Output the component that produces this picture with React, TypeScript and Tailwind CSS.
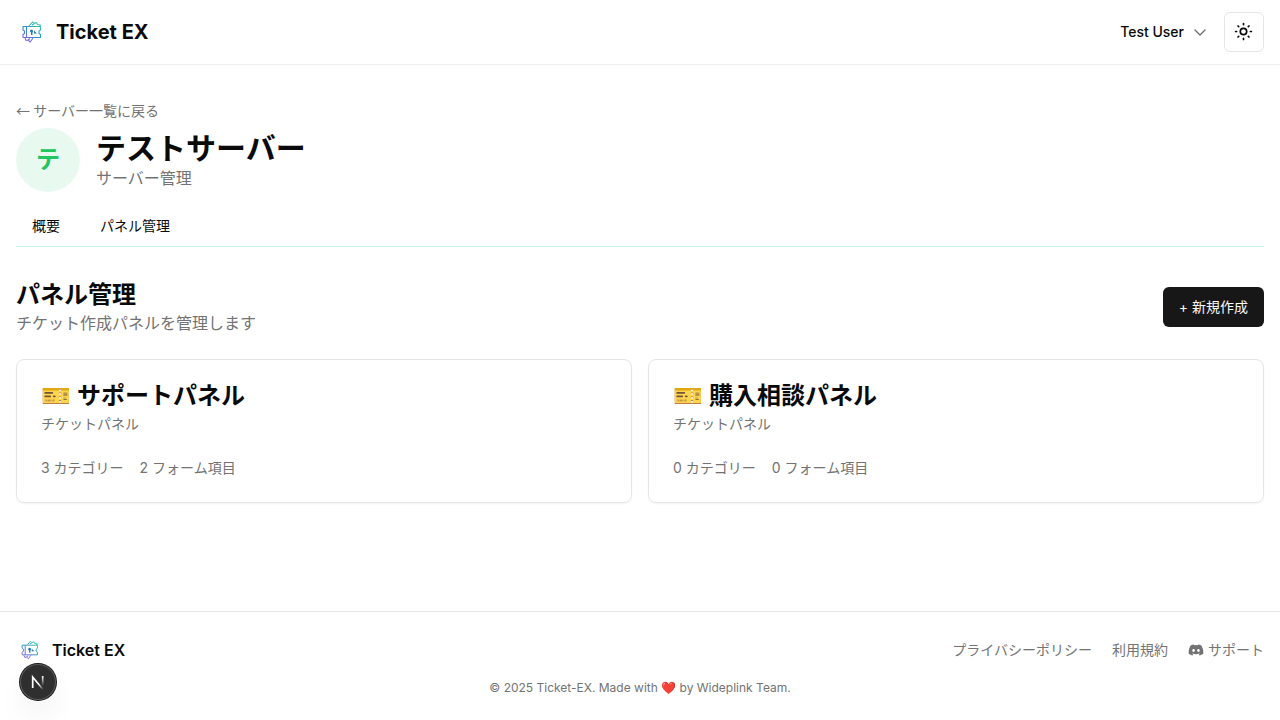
import { FaDiscord } from "react-icons/fa";

const panels = [
  { id: "support", name: "サポートパネル", categories: 3, fields: 2 },
  { id: "purchase", name: "購入相談パネル", categories: 0, fields: 0 },
];

function Logo({ id, className }: { id: string; className: string }) {
  return (
    <svg viewBox="0 0 32 32" fill="none" className={className} aria-hidden="true">
      <defs>
        <linearGradient id={id} x1="8" y1="26" x2="23" y2="6" gradientUnits="userSpaceOnUse">
          <stop offset="0" stopColor="#a05be0" />
          <stop offset="0.5" stopColor="#2f8fd0" />
          <stop offset="1" stopColor="#35d3a0" />
        </linearGradient>
      </defs>
      <g stroke={`url(#${id})`} strokeWidth="1.100" strokeLinejoin="round">
        <path d="M7 10.500h17.500v3.500l-1.500 1v2.500l1.500 1V21.500H7V18.500l1.500-1V15L7 14z" />
        <path d="M10.500 10.500v11" />
        <path d="M13 10l3.500-4 1.500 1.500 2.500-1 .8 2 3.200.5-1 1.500M16 9l2.500-1.500" />
        <path d="M9 22l1 2.500 2-.5 2.200 2 2.800-4M12 24l2-1.500" />
      </g>
      <circle cx="15.500" cy="15" r="1.500" fill="#2478b8" />
      <path d="M15 15h1.500v4H15zM18 14.500l3 3h-3z" fill="#2478b8" />
    </svg>
  );
}

function SunIcon() {
  return (
    <svg
      viewBox="0 0 20 20"
      fill="none"
      stroke="currentColor"
      strokeWidth="1.700"
      strokeLinecap="round"
      className="size-5"
      aria-hidden="true"
    >
      <circle cx="9.500" cy="9.500" r="3.200" />
      <path d="M9.500 1.600v1M9.500 16.400v1M1.600 9.500h1M16.400 9.500h1M4 4l.7.700M14.300 14.300l.7.700M4 15l.7-.7M14.300 4.700l.7-.7" />
    </svg>
  );
}

function ChevronIcon() {
  return (
    <svg
      viewBox="0 0 16 16"
      fill="none"
      stroke="currentColor"
      strokeWidth="1.300"
      strokeLinecap="round"
      strokeLinejoin="round"
      className="size-4 opacity-60"
      aria-hidden="true"
    >
      <path d="M3 6l5 5 5-5" />
    </svg>
  );
}

function Header() {
  return (
    <header className="border-b border-[#f0f0f0]">
      <div className="flex h-16 items-center justify-between px-4">
        <a href="#" className="flex items-center gap-2">
          <Logo id="logo-header" className="size-8" />
          <span className="text-xl font-bold">Ticket EX</span>
        </a>
        <div className="flex items-center gap-4">
          <button type="button" className="flex items-center gap-2 text-sm font-medium">
            Test User
            <ChevronIcon />
          </button>
          <button
            type="button"
            aria-label="テーマ切り替え"
            className="flex size-10 items-center justify-center rounded-md border border-[#e5e5e5]"
          >
            <SunIcon />
          </button>
        </div>
      </div>
    </header>
  );
}

function PanelCard({ panel }: { panel: (typeof panels)[number] }) {
  return (
    <div className="rounded-lg border border-[#e5e5e5] p-6 shadow-xs">
      <h3 className="text-2xl leading-none font-semibold">🎫 {panel.name}</h3>
      <p className="mt-1.5 text-sm text-[#737373]">チケットパネル</p>
      <div className="mt-6 flex gap-4 text-sm text-[#737373]">
        <span>{panel.categories} カテゴリー</span>
        <span>{panel.fields} フォーム項目</span>
      </div>
    </div>
  );
}

function Footer() {
  return (
    <footer className="border-t border-[#e5e5e5] px-4 py-6">
      <div className="flex h-7 items-center justify-between">
        <a href="#" className="flex items-center gap-2">
          <Logo id="logo-footer" className="size-7" />
          <span className="font-semibold">Ticket EX</span>
        </a>
        <nav className="flex items-center gap-5 text-sm text-[#737373]">
          <a href="#">プライバシーポリシー</a>
          <a href="#">利用規約</a>
          <a href="#" className="flex items-center gap-1">
            <FaDiscord className="size-4" />
            サポート
          </a>
        </nav>
      </div>
      <p className="mt-4 text-center text-xs text-[#737373]">
        © 2025 Ticket-EX. Made with ❤️ by Wideplink Team.
      </p>
    </footer>
  );
}

function DevBadge() {
  return (
    <button
      type="button"
      aria-label="Open dev tools"
      className="fixed bottom-5 left-5 size-9 rounded-full bg-[#2f2f2f] shadow-[0_0_0_1px_#171717,inset_0_0_0_1px_#5a5a5a,0_16px_32px_-8px_rgba(0,0,0,0.16)]"
    >
      <svg viewBox="0 0 36 36" fill="none" className="size-9" aria-hidden="true">
        <defs>
          <linearGradient id="n-diagonal" x1="20" y1="19" x2="24" y2="25" gradientUnits="userSpaceOnUse">
            <stop stopColor="#fff" />
            <stop offset="1" stopColor="#fff" stopOpacity="0" />
          </linearGradient>
          <linearGradient id="n-stem" x1="23" y1="12" x2="23" y2="22" gradientUnits="userSpaceOnUse">
            <stop stopColor="#fff" />
            <stop offset="1" stopColor="#fff" stopOpacity="0" />
          </linearGradient>
        </defs>
        <path d="M12.700 24V13L23 25.500" stroke="url(#n-diagonal)" strokeWidth="1.700" />
        <path d="M22.700 12v10" stroke="url(#n-stem)" strokeWidth="1.700" />
      </svg>
    </button>
  );
}

export default function App() {
  return (
    <div
      lang="ja"
      className="flex min-h-screen flex-col bg-white font-['Inter','Noto_Sans_CJK_JP',sans-serif] text-[#0a0a0a]"
    >
      <Header />
      <main className="flex-1 px-4 py-8">
        <a
          href="#"
          className="block font-['Noto_Sans_CJK_JP',sans-serif] text-sm leading-[27px] text-[#737373]"
        >
          ← サーバー一覧に戻る
        </a>
        <div className="mt-1 flex items-center gap-4">
          <div className="flex size-16 items-center justify-center rounded-full bg-[#e8faef] text-2xl font-bold text-[#22c55e]">
            テ
          </div>
          <div>
            <h1 className="text-3xl font-bold">テストサーバー</h1>
            <p className="text-[#737373]">サーバー管理</p>
          </div>
        </div>

        <nav className="mt-4 flex gap-2 border-b border-[#c8efe0] pb-0.5 text-sm">
          <a href="#" className="px-4 py-2">
            概要
          </a>
          <a href="#" className="px-4 py-2">
            パネル管理
          </a>
        </nav>

        <div className="mt-8 flex items-center justify-between">
          <div>
            <h2 className="text-2xl font-bold">パネル管理</h2>
            <p className="text-[#737373]">チケット作成パネルを管理します</p>
          </div>
          <button type="button" className="h-10 rounded-md bg-[#171717] px-4 text-sm text-[#fafafa]">
            + 新規作成
          </button>
        </div>

        <div className="mt-6 grid grid-cols-2 gap-4">
          {panels.map((panel) => (
            <PanelCard key={panel.id} panel={panel} />
          ))}
        </div>
      </main>
      <Footer />
      <DevBadge />
    </div>
  );
}
